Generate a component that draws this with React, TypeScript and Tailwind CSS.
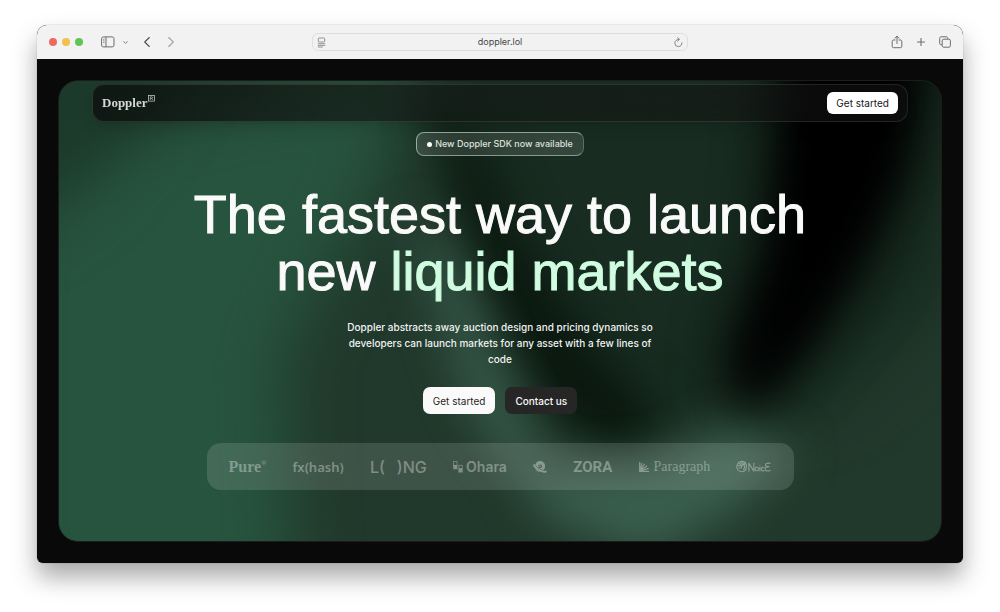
import React from 'react';
import { ChevronDown, Plus } from 'lucide-react';

const Toolbar = () => {
    return (
        <header className="grid h-[34px] grid-cols-[1fr_376px_1fr] items-center bg-[#f2f2f2] px-3 text-[#6d6d6d]">
            <div className="flex items-center">
                <div className="flex gap-[5px]">
                    <span className="size-2 rounded-full bg-[#ec6a5e]" />
                    <span className="size-2 rounded-full bg-[#f4bf4f]" />
                    <span className="size-2 rounded-full bg-[#61c554]" />
                </div>
                <button aria-label="Sidebar" className="ml-[18px]">
                    <svg width="14" height="12" viewBox="0 0 14 12" fill="none" stroke="currentColor">
                        <rect x="0.6" y="0.9" width="12.4" height="10" rx="1.8" />
                        <path d="M5 1v10" />
                        <path d="M2 3.2h1.6M2 4.9h1.6M2 6.6h1.6" strokeWidth="0.7" />
                    </svg>
                </button>
                <button aria-label="Tab groups" className="ml-[7px]">
                    <ChevronDown size={7} strokeWidth={3} />
                </button>
                <button aria-label="Back" className="ml-[14px]">
                    <svg width="8" height="12" viewBox="0 0 8 12" fill="none" stroke="#505050" strokeWidth="1.1">
                        <path d="M6.3 1.5 1.7 6l4.6 4.5" strokeLinecap="round" strokeLinejoin="round" />
                    </svg>
                </button>
                <button aria-label="Forward" className="ml-4 text-[#a3a3a3]">
                    <svg width="8" height="12" viewBox="0 0 8 12" fill="none" stroke="currentColor" strokeWidth="1.1">
                        <path d="M1.7 1.5 6.3 6l-4.6 4.5" strokeLinecap="round" strokeLinejoin="round" />
                    </svg>
                </button>
            </div>
            <div className="flex h-[18px] items-center rounded-md border border-[#dedede] px-1">
                <svg width="9" height="11" viewBox="0 0 9 11" fill="none" stroke="#7c7c7c" strokeWidth="0.8">
                    <rect x="1.3" y="1" width="6.4" height="4" rx="0.8" />
                    <path d="M0.8 6.7h7.4M0.8 8.4h7.4M0.8 10h5" />
                </svg>
                <input
                    aria-label="Address"
                    readOnly
                    defaultValue="doppler.lol"
                    className="min-w-0 flex-1 bg-transparent text-center text-[9px] leading-4 text-[#454545] outline-none"
                />
                <button aria-label="Reload">
                    <svg width="9" height="11" viewBox="0 0 9 11" fill="none" stroke="#7c7c7c" strokeWidth="0.9">
                        <path d="M8 5.8A3.6 3.6 0 1 1 4.6 2.4" strokeLinecap="round" />
                        <path d="m3.6 0.7 2 1.7-2 1.8" strokeLinecap="round" strokeLinejoin="round" />
                    </svg>
                </button>
            </div>
            <div className="flex items-center justify-end gap-3">
                <button aria-label="Share">
                    <svg width="12" height="14" viewBox="0 0 12 14" fill="none" stroke="currentColor" strokeLinecap="round" strokeLinejoin="round">
                        <path d="M4 5H2.6c-.9 0-1.4.5-1.4 1.3v5c0 .9.5 1.4 1.4 1.4h6.8c.9 0 1.4-.5 1.4-1.4v-5c0-.8-.5-1.3-1.4-1.3H8M6 8.5V1.3M3.9 3.2 6 1.2l2.1 2" />
                    </svg>
                </button>
                <button aria-label="New tab">
                    <Plus size={12} strokeWidth={2.2} />
                </button>
                <button aria-label="Tab overview">
                    <svg width="12" height="12" viewBox="0 0 12 12" fill="none" stroke="currentColor">
                        <rect x="3.2" y="3.2" width="8.2" height="8" rx="1.6" />
                        <path d="M3 8.8h-.8C1.2 8.8.7 8.3.7 7.3V2.3C.7 1.3 1.2.8 2.2.8h5c1 0 1.5.5 1.5 1.5V3" />
                    </svg>
                </button>
            </div>
        </header>
    );
};

const Backdrop = () => {
    return (
        <svg
            className="absolute inset-0 h-full w-full"
            viewBox="0 0 884 462"
            preserveAspectRatio="none"
            aria-hidden="true"
        >
            <defs>
                <filter id="soft" x="-50%" y="-50%" width="200%" height="200%" colorInterpolationFilters="sRGB">
                    <feGaussianBlur stdDeviation="32" />
                </filter>
                <filter id="mid" x="-50%" y="-50%" width="200%" height="200%" colorInterpolationFilters="sRGB">
                    <feGaussianBlur stdDeviation="22" />
                </filter>
            </defs>
            <rect width="884" height="462" fill="#21392c" />
            <path d="M-60 80 L150 20 L365 -20 L310 120 L225 270 L235 540 L-60 540Z" fill="#27543e" filter="url(#soft)" />
            <path d="M-60 -60 L150 -60 L90 30 L20 110 L-60 160Z" fill="#1c3a2b" filter="url(#soft)" />
            <path d="M390 -60 L900 -60 L900 200 L780 320 L580 350 L460 240 L400 80Z" fill="#182c21" filter="url(#soft)" />
            <path d="M365 10 L415 50 L465 160 L530 260 L610 340 L560 380 L490 330 L430 200Z" fill="#0a170e" filter="url(#mid)" />
            <path d="M350 130 L395 180 L440 290 L490 390 L600 385 L670 345 L740 370 L680 430 L590 480 L490 440 L415 330Z" fill="#3a5e4e" filter="url(#mid)" />
            <path d="M735 -60 L884 -60 L850 90 L800 190 L740 270 L695 325 L675 285 L720 165Z" fill="#000000" filter="url(#soft)" />
            <path d="M740 -60 L850 -60 L830 90 L790 180 L740 270 L695 330 L675 300 L720 165Z" fill="#000000" filter="url(#mid)" />
        </svg>
    );
};

const Navbar = () => {
    return (
        <nav className="mx-[33px] mt-[3px] flex h-[38px] items-center justify-between rounded-xl border border-white/10 bg-linear-to-r from-[#0a0a0a]/70 via-[#121212]/50 to-[#121212]/60 px-[9px] shadow-lg backdrop-blur-md">
            <a href="#" className="flex items-start font-['Liberation_Serif',serif] text-[13px] leading-4 font-bold text-[#d5d8d6]">
                Doppler
                <svg width="7" height="7" viewBox="0 0 7 7" fill="none" stroke="currentColor" strokeWidth="0.7">
                    <rect x="0.5" y="0.5" width="6" height="5.6" />
                    <path d="M2.3 5V1.8h1.4c1.3 0 1.3 1.6 0 1.6H2.3M3.6 3.4 4.8 5" strokeWidth="0.6" />
                </svg>
            </a>
            <button className="h-[22px] rounded-md bg-white px-[9px] text-[10px] leading-4 text-[#171717]">
                Get started
            </button>
        </nav>
    );
};

const Logos = () => {
    return (
        <div className="mt-[29px] flex h-[47px] w-full max-w-[587px] items-center justify-between self-center rounded-[14px] bg-white/13 px-[22px] text-white/35">
            <span className="flex font-['Liberation_Serif',serif] text-[16px] leading-5 font-bold">
                Pure<span className="text-[7px] leading-3">®</span>
            </span>
            <span className="font-['Noto_Sans',sans-serif] text-[13px] leading-5 font-semibold">fx(hash)</span>
            <span className="flex gap-3 font-['Inter',sans-serif] text-[16px] leading-5 font-medium">
                <span>L(</span>
                <span>)NG</span>
            </span>
            <span className="flex items-center gap-[3px] text-[14px] leading-5 font-semibold">
                <svg width="10" height="12" viewBox="0 0 10 12" fill="none" stroke="currentColor" strokeWidth="0.8">
                    <path d="M0.5 0.5h3.6v4H0.5z" />
                    <path d="M0.2 4.5h4.2v3.7H0.2zM5.4 7.8h4.3v3.7H5.4z" fill="currentColor" stroke="none" />
                    <path d="M5.8 4.3h3.5v3.3H5.8z" />
                </svg>
                Ohara
            </span>
            <svg width="14" height="12" viewBox="0 0 14 12" fill="currentColor">
                <path
                    fillRule="evenodd"
                    d="M7 0a5.200 5.200 0 0 1 5 6.600c-.3 1.100-.9 2-1.700 2.600C8.500 8.900 4.500 6.800 2.200 4.300A5.200 5.200 0 0 1 7 0Zm.2 3.400a1.900 1.900 0 1 0 0 3.800 1.900 1.900 0 0 0 0-3.800Z"
                />
                <circle cx="7.2" cy="5.3" r="0.8" />
                <path d="M1.6 3.1C.4 3.3-.1 3.9.2 4.8c.8 2.6 7.2 6.8 11.500 7 1.8.1 2.400-.8 1.400-2.300l-.6-.9c.4 1.100 0 1.500-1.100 1.400C7.800 9.600 2.400 6.200 1.600 3.100Z" />
                <path d="M2.2 6.9c.6 2.6 2.7 4.2 5.3 4.1-2.100-.9-3.900-2.200-5.300-4.100Z" />
            </svg>
            <span className="font-['Roboto',sans-serif] text-[15px] leading-5 font-bold">ZORA</span>
            <span className="flex items-center gap-[5px] font-['Liberation_Serif',serif] text-[14px] leading-5">
                <svg width="10" height="10" viewBox="0 0 10 10" fill="none" stroke="currentColor" strokeWidth="1.3">
                    <path d="M0.7 0v9.3H10M1 9 3 1.200M1 9l4.600-7M1 9l7-5.200M1 9l8.600-2.600" />
                </svg>
                Paragraph
            </span>
            <svg
                width="35"
                height="13"
                viewBox="0 0 35 13"
                fill="none"
                stroke="currentColor"
                strokeWidth="1.1"
                strokeLinecap="round"
                strokeLinejoin="round"
                role="img"
                aria-label="Noice"
            >
                <path d="M1.400 4.500C2.400 2.500 3.800 1.500 5.500 1.300c3-.3 4.900 1.500 4.900 4.700 0 3.500-1.800 5.700-4.600 5.700-2.400 0-4.300-1.500-4.800-3.700-.3-1.300-.2-2.400.4-3.500ZM2.300 2.700l2.400 2.100M4 1.600l2.200 2.800M6.200 1.200l1.400 3M8.300 1.700l.6 3.100M1 5.600l3.400.2c1.600.1 1.400 2.200 0 2.200H3.200M5 6l2.300-1.200c1.600.8 1.700 3.200.2 4.400" />
                <path d="M12.9 11.300V3.400l5 7.700V3.400" />
                <ellipse cx="20.8" cy="9.1" rx="1.7" ry="1.9" />
                <path d="M23.900 7v4M23.900 5.200v.1M28 7.600c-1.500-.9-2.600 0-2.600 1.500s1.300 2.500 2.800 1.500M34 3.400c-3-.8-4.700.2-4.500 1.700.1 1.200 1.500 1.700 3.500 1.500-2.600 0-3.900.8-3.900 2.300 0 2 2.500 2.800 5 1.500" />
            </svg>
        </div>
    );
};

export default function App() {
    return (
        <div className="min-h-screen bg-white px-[37px] pt-[25px] pb-12 font-['Inter',sans-serif]">
            <div className="overflow-hidden rounded-t-[10px] rounded-b-md bg-[#090909] shadow-[0_0_1px_rgba(0,0,0,0.5),0_14px_24px_rgba(0,0,0,0.34)]">
                <Toolbar />
                <main className="p-[21px]">
                    <section className="relative overflow-hidden rounded-[20px] border border-white/8">
                        <Backdrop />
                        <div className="relative flex flex-col pb-[51px]">
                            <Navbar />
                            <a
                                href="#"
                                className="mt-[10px] flex h-6 items-center gap-[3px] self-center rounded-lg border border-t-[#9aa59f] border-r-[#5e6e65] border-b-[#8b9890] border-l-[#a0aaa4] bg-white/12 px-[10px] text-[9px] leading-4 font-medium text-[#dce1de]"
                            >
                                <span className="size-[5px] rounded-full border border-white/50 bg-white" />
                                New Doppler SDK now available
                            </a>
                            <h1 className="mt-[30px] text-center font-['Liberation_Sans',sans-serif] text-[54px] leading-[57px] text-[#fafafa] [-webkit-text-stroke:1px_currentColor]">
                                The fastest way to launch
                                <br />
                                new <span className="text-[#d0fde1]">liquid markets</span>
                            </h1>
                            <p className="mt-[19px] w-[320px] self-center text-center text-[10px] leading-4 font-medium text-[#f0f2f1]">
                                Doppler abstracts away auction design and pricing dynamics so
                                developers can launch markets for any asset with a few lines of code
                            </p>
                            <div className="mt-5 flex justify-center gap-[10px] text-[10px] leading-4 font-medium">
                                <button className="h-[27px] rounded-[7px] bg-[#fafafa] px-[10px] font-normal text-[#262626]">
                                    Get started
                                </button>
                                <button className="h-[27px] rounded-[7px] bg-[#262626] px-[10px] text-[#fafafa]">
                                    Contact us
                                </button>
                            </div>
                            <Logos />
                        </div>
                    </section>
                </main>
            </div>
        </div>
    );
}
